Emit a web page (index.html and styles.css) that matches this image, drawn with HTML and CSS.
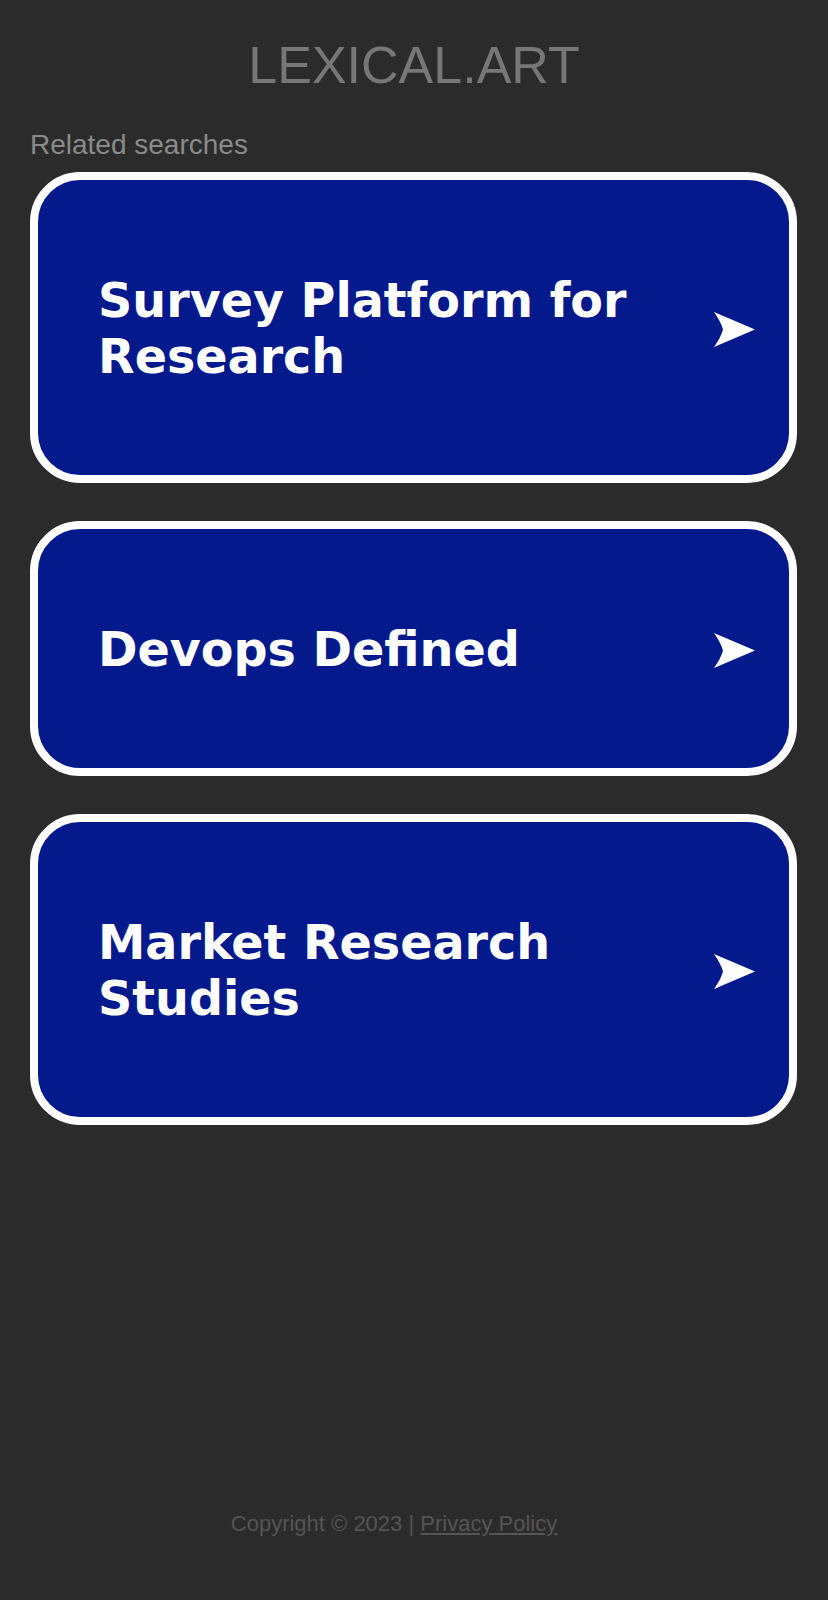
FILE: index.html
```html
<!DOCTYPE html>
<html>
<head>
	<meta charset="utf-8">
	<meta name="viewport" content="width=device-width, initial-scale=1">
	<title>LEXICAL.ART</title>
	<link rel="stylesheet" href="styles.css">
</head>
<body>

<div class="page">
	<h1 class="logo">LEXICAL.ART</h1>

	<div class="related">
		<div class="related-title">Related searches</div>

		<a class="card" href="#">
			<span class="card-text">Survey Platform for Research</span>
			<svg class="card-arrow" viewBox="0 0 41 35" width="41" height="35"><path d="M0 0 L41 17.5 L0 35 Q7 25 9 17.5 Q7 10 0 0 Z" fill="#fff"/></svg>
		</a>

		<a class="card" href="#">
			<span class="card-text">Devops Defined</span>
			<svg class="card-arrow" viewBox="0 0 41 35" width="41" height="35"><path d="M0 0 L41 17.5 L0 35 Q7 25 9 17.5 Q7 10 0 0 Z" fill="#fff"/></svg>
		</a>

		<a class="card" href="#">
			<span class="card-text">Market Research Studies</span>
			<svg class="card-arrow" viewBox="0 0 41 35" width="41" height="35"><path d="M0 0 L41 17.5 L0 35 Q7 25 9 17.5 Q7 10 0 0 Z" fill="#fff"/></svg>
		</a>
	</div>

	<div class="footer">
		Copyright &copy; 2023 | <a href="#">Privacy Policy</a>
	</div>
</div>

</body>
</html>
```

FILE: styles.css
```css
* {
	box-sizing: border-box;
	margin: 0;
	padding: 0;
}
body {
	background-color: #2b2b2b;
	font-family: 'Liberation Sans', Arial, sans-serif;
}
.page {
	display: flex;
	flex-direction: column;
	min-height: 100vh;
}
.logo {
	margin-top: 35px;
	text-align: center;
	font-size: 52px;
	line-height: 60px;
	font-weight: normal;
	color: #777;
}
.related {
	padding: 0 31px 0 30px;
}
.related-title {
	margin-top: 35px;
	font-size: 28px;
	line-height: 30px;
	color: #8a8a8a;
	margin-bottom: 12px;
}
.card {
	display: flex;
	align-items: center;
	justify-content: space-between;
	gap: 30px;
	padding: 93px 34px 90px 60px;
	margin-bottom: 38px;
	background-color: #03198c;
	border: 8px solid #fff;
	border-radius: 50px;
	text-decoration: none;
}
.card-text {
	flex: 1;
	font-family: 'DejaVu Sans', Verdana, sans-serif;
	font-weight: bold;
	font-size: 47.6px;
	line-height: 56px;
	color: #fff;
}
.card-arrow {
	flex-shrink: 0;
	display: block;
}
.footer {
	margin-top: auto;
	padding: 0 40px 63px 0;
	text-align: center;
	font-size: 22px;
	line-height: 26px;
	color: #555;
}
.footer a {
	color: #555;
}
```
